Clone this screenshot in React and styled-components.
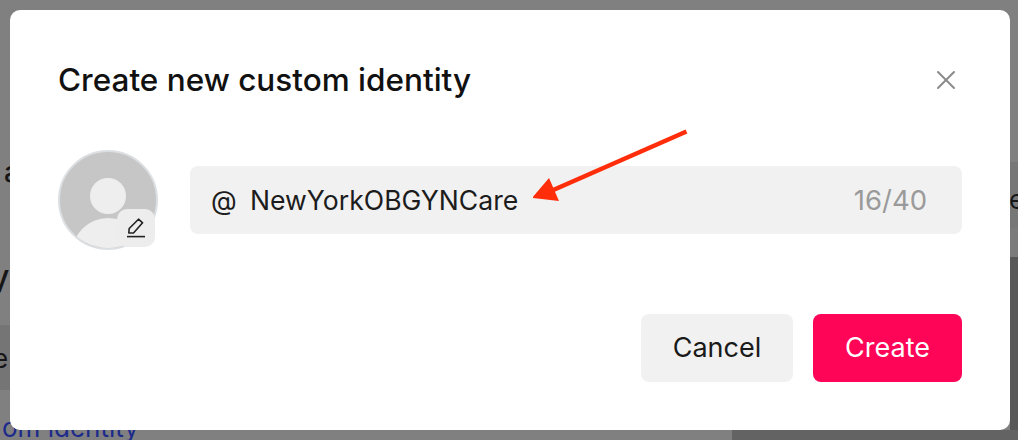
import React from 'react';
import styled, { createGlobalStyle } from 'styled-components';
import { X } from 'lucide-react';

const GlobalStyle = createGlobalStyle`
    html, body {
        margin: 0;
        padding: 0;
        background: #808080;
    }
    * {
        box-sizing: border-box;
    }
`;

const Page = styled.div`
    position: relative;
    width: 1018px;
    height: 440px;
    overflow: hidden;
    padding: 10px 8px 10px 10px;
    background: #808080;
    font-family: Inter, "Liberation Sans", sans-serif;
`;

const Band = styled.div`
    position: absolute;
    left: ${props => props.left}px;
    top: ${props => props.top}px;
    width: ${props => props.width}px;
    height: ${props => props.height}px;
    background: ${props => props.color};
`;

const BehindText = styled.span`
    position: absolute;
    left: ${props => props.left}px;
    top: ${props => props.top}px;
    font-size: ${props => props.size}px;
    font-weight: ${props => props.weight || 400};
    line-height: 1;
    white-space: nowrap;
    color: ${props => props.color || '#161616'};
`;

const Modal = styled.div`
    position: relative;
    width: 1000px;
    height: 420px;
    display: flex;
    flex-direction: column;
    padding: 49px 48px 48px 48px;
    background: #fff;
    border-radius: 10px;
`;

const Header = styled.div`
    display: flex;
    align-items: center;
    justify-content: space-between;
    height: 42px;
`;

const Title = styled.h2`
    margin: 0;
    font-size: 31.5px;
    font-weight: 500;
    line-height: 42px;
    color: #111;
`;

const CloseButton = styled.button`
    display: flex;
    width: 32px;
    height: 32px;
    padding: 0;
    border: none;
    background: transparent;
    color: #8a8a8a;
`;

const IdentityRow = styled.div`
    display: flex;
    align-items: center;
    gap: 32px;
    margin-top: 49px;
`;

const AvatarWrap = styled.div`
    position: relative;
    flex: none;
    width: 100px;
    height: 100px;
`;

const EditBadge = styled.div`
    position: absolute;
    right: 3px;
    bottom: 3px;
    display: flex;
    align-items: center;
    justify-content: center;
    width: 38px;
    height: 38px;
    border-radius: 10px;
    background: #ededed;
`;

const NameField = styled.div`
    display: flex;
    align-items: center;
    width: 772px;
    height: 68px;
    padding: 0 35px 0 21px;
    border-radius: 8px;
    background: #f1f1f1;
    font-size: 26.6px;
    color: #1c1c1c;
`;

const AtSign = styled.span`
    width: 39px;
`;

const NameValue = styled.span`
    flex: 1;
`;

const Counter = styled.span`
    font-size: 27.5px;
    color: #9a9a9a;
`;

const Arrow = styled.svg`
    position: absolute;
    left: 523px;
    top: 118px;
`;

const Footer = styled.div`
    display: flex;
    justify-content: flex-end;
    gap: 20px;
    margin-top: auto;
`;

const Button = styled.button`
    width: ${props => props.primary ? 149 : 152}px;
    height: 68px;
    padding: 0 0 2px;
    border: none;
    border-radius: 8px;
    background: ${props => props.primary ? '#fe0558' : '#f1f1f1'};
    color: ${props => props.primary ? '#fff' : '#1a1a1a'};
    font-family: inherit;
    font-size: 27px;
`;

const AvatarIcon = () => (
    <svg width="100" height="100" viewBox="0 0 100 100">
        <defs>
            <clipPath id="avatar-clip">
                <circle cx="50" cy="50" r="48" />
            </clipPath>
        </defs>
        <circle cx="50" cy="50" r="49" fill="#c6c6c6" stroke="#dcdfe2" strokeWidth="2" />
        <g clipPath="url(#avatar-clip)">
            <circle cx="50" cy="46" r="18" fill="#eeeeee" />
            <circle cx="50" cy="104" r="36" fill="#eeeeee" />
        </g>
    </svg>
);

const PencilIcon = () => (
    <svg width="20" height="20" viewBox="0 0 20 20" fill="none" stroke="#222" strokeWidth="1.6">
        <path d="M2.8 15 L3.2 10.5 L12.5 1.2 L16.6 4.8 L7.5 15 Z" strokeLinejoin="round" />
        <path d="M1 18.6 H19" />
    </svg>
);

const App = () => {
    return (
        <Page>
            <GlobalStyle />
            <Band left={0} top={325} width={10} height={65} color="#757575" />
            <Band left={732} top={430} width={286} height={10} color="#636363" />
            <Band left={1010} top={162} width={8} height={66} color="#777777" />
            <Band left={1010} top={228} width={8} height={29} color="#7b7b7b" />
            <Band left={1010} top={257} width={8} height={173} color="#575757" />
            <BehindText left={4} top={158} size={28} weight={500}>a</BehindText>
            <BehindText left={-9} top={261} size={32} weight={500}>y</BehindText>
            <BehindText left={-7} top={346} size={26}>e</BehindText>
            <BehindText left={1009} top={187} size={26}>e</BehindText>
            <BehindText left={2} top={415} size={26} color="#1c2a8c">om identity</BehindText>
            <Modal>
                <Header>
                    <Title>Create new custom identity</Title>
                    <CloseButton aria-label="Close">
                        <X size={32} strokeWidth={1.5} />
                    </CloseButton>
                </Header>
                <IdentityRow>
                    <AvatarWrap>
                        <AvatarIcon />
                        <EditBadge>
                            <PencilIcon />
                        </EditBadge>
                    </AvatarWrap>
                    <NameField>
                        <AtSign>@</AtSign>
                        <NameValue>NewYorkOBGYNCare</NameValue>
                        <Counter>16/40</Counter>
                    </NameField>
                </IdentityRow>
                <Footer>
                    <Button>Cancel</Button>
                    <Button primary>Create</Button>
                </Footer>
                <Arrow width="160" height="80" viewBox="0 0 160 80">
                    <path d="M153.5 3.5 L18 63" stroke="#ff2d0a" strokeWidth="4.5" />
                    <path d="M-1 70 L16 50 L26 73 Z" fill="#ff2d0a" />
                </Arrow>
            </Modal>
        </Page>
    );
};

export default App;
